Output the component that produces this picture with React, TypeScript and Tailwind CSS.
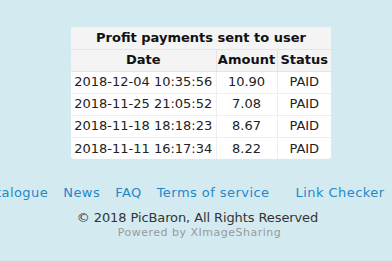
import React from 'react';

const payments = [
  { date: '2018-12-04 10:35:56', amount: '10.90', status: 'PAID' },
  { date: '2018-11-25 21:05:52', amount: '7.08', status: 'PAID' },
  { date: '2018-11-18 18:18:23', amount: '8.67', status: 'PAID' },
  { date: '2018-11-11 16:17:34', amount: '8.22', status: 'PAID' },
];

const links = ['Catalogue', 'News', 'FAQ', 'Terms of service'];

const App: React.FC = () => {
  return (
    <div className="min-h-[261px] w-[392px] overflow-hidden bg-[#d4eaf1] font-['DejaVu_Sans',sans-serif] text-[13px] text-[#222]">
      {/* Payments table */}
      <div className="flex pt-[27px] pl-[71px]">
        <div className="w-[260px] overflow-hidden rounded-[3px] bg-white">
          <table className="w-full border-collapse">
            <thead>
              <tr className="bg-[#f4f4f4]">
                <th colSpan={3} className="h-[22px] border-b border-[#e4e4e4] p-0 text-center font-bold text-[#111]">
                  Profit payments sent to user
                </th>
              </tr>
              <tr className="bg-[#f4f4f4]">
                <th className="h-[22px] w-[145px] border-r border-b border-[#e4e4e4] p-0 font-bold text-[#111]">Date</th>
                <th className="h-[22px] w-[61px] border-r border-b border-[#e4e4e4] p-0 font-bold text-[#111]">Amount</th>
                <th className="h-[22px] border-b border-[#e4e4e4] p-0 font-bold text-[#111]">Status</th>
              </tr>
            </thead>
            <tbody>
              {payments.map((p, i) => (
                <tr key={p.date}>
                  <td className={`h-[22px] border-r border-[#eeeeee] p-0 text-center ${i < 3 ? 'border-b' : ''}`}>{p.date}</td>
                  <td className={`h-[22px] border-r border-[#eeeeee] p-0 text-center ${i < 3 ? 'border-b' : ''}`}>{p.amount}</td>
                  <td className={`h-[22px] border-[#eeeeee] p-0 text-center ${i < 3 ? 'border-b' : ''}`}>{p.status}</td>
                </tr>
              ))}
            </tbody>
          </table>
        </div>
      </div>

      {/* Footer */}
      <div className="mt-[26px] ml-[-22px] flex whitespace-nowrap leading-[16px] tracking-[0.45px] text-[#1e88c8]">
        {links.map((l) => (
          <a key={l} href="#" className="mr-[15px]">{l}</a>
        ))}
        <a href="#" className="ml-[11px]">Link Checker</a>
      </div>
      <div className="mt-[9px] pl-[3px] text-center leading-[16px] tracking-[-0.1px] text-[#333]">© 2018 PicBaron, All Rights Reserved</div>
      <div className="pl-[7px] text-center text-[11px] leading-[14px] tracking-[0.5px] text-[#999]">Powered by XImageSharing</div>
    </div>
  );
};

export default App;
